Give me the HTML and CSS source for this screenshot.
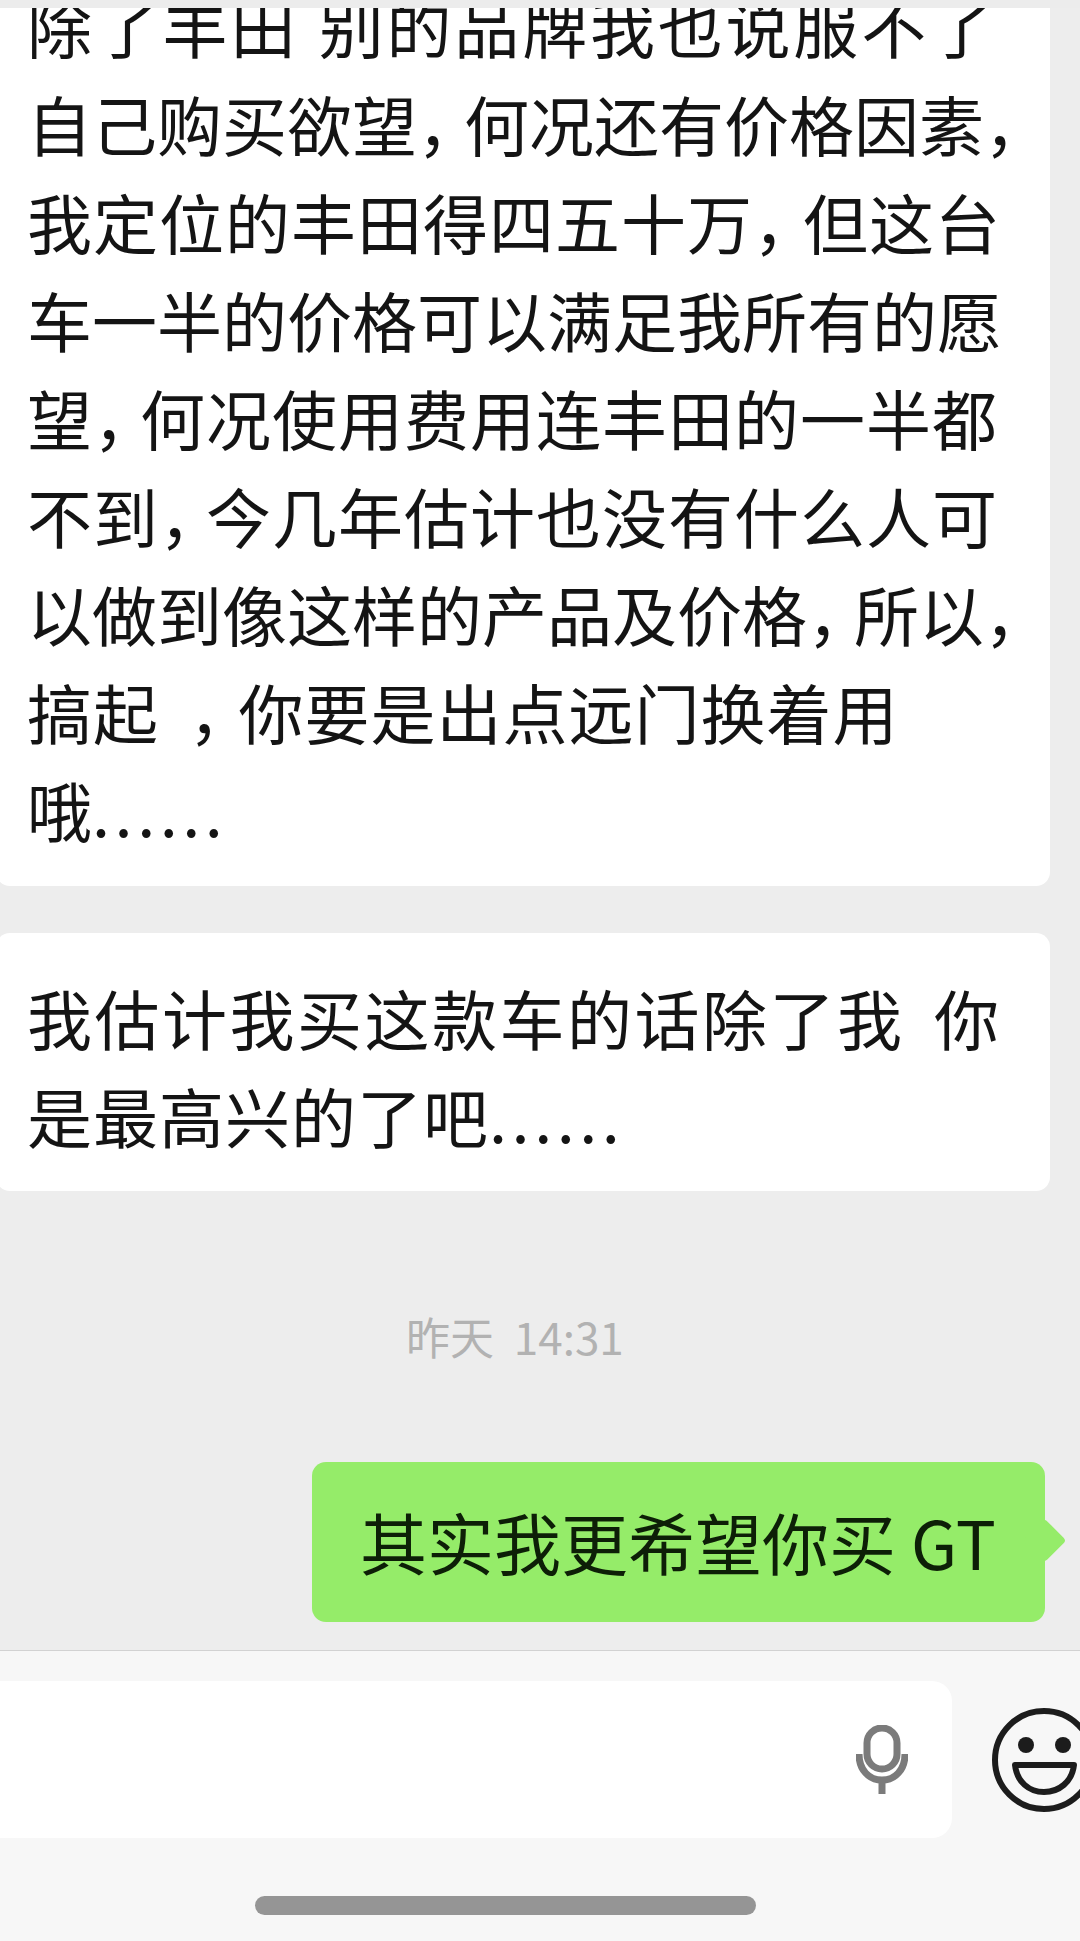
FILE: index.html
```html
<!DOCTYPE html>
<html lang="zh-CN">
<head>
<meta charset="utf-8">
<title>聊天</title>
<link rel="stylesheet" href="styles.css">
</head>
<body>
<div class="strip"></div>
<main class="chat">
  <section class="bubble first">
    <p class="line top">除了丰田<span class="gap-tight"> </span>别的品牌我也说服不了</p>
    <p class="line">自己购买欲望<span class="cm-tight">，</span>何况还有价格因素<span class="cm-tight">，</span></p>
    <p class="line mid">我定位的丰田得四五十万<span class="cm">，</span>但这台</p>
    <p class="line">车一半的价格可以满足我所有的愿</p>
    <p class="line mid">望<span class="cm-tight">，</span>何况使用费用连丰田的一半都</p>
    <p class="line mid">不到<span class="cm-tight">，</span>今几年估计也没有什么人可</p>
    <p class="line">以做到像这样的产品及价格<span class="cm-tight">，</span>所以<span class="cm-tight">，</span></p>
    <p class="line mid">搞起<span class="gap"> </span><span class="cm">，</span>你要是出点远门换着用</p>
    <p class="line">哦<span class="dots">......</span></p>
  </section>
  <section class="bubble second">
    <p class="line wide">我估计我买这款车的话除了我<span class="gap"> </span>你</p>
    <p class="line mid">是最高兴的了吧<span class="dots">......</span></p>
  </section>
  <div class="time">昨天 14:31</div>
  <section class="mine"><p class="mine-text">其实我更希望你买 GT</p></section>
</main>
<footer class="bar">
  <div class="input-row">
    <div class="input">
      <svg class="mic" viewBox="0 0 52 69" aria-hidden="true">
        <rect x="11" y="3" width="30" height="41" rx="15" fill="none" stroke="#7b7b7b" stroke-width="7"/>
        <path d="M3 29 C3 45 13 55 26 55 C39 55 49 45 49 29" fill="none" stroke="#7b7b7b" stroke-width="7"/>
        <path d="M26 55 V69" fill="none" stroke="#7b7b7b" stroke-width="7"/>
      </svg>
    </div>
    <svg class="emoji" viewBox="0 0 106 106" aria-hidden="true">
      <circle cx="53" cy="53" r="49" fill="none" stroke="#1c1c1c" stroke-width="6"/>
      <circle cx="35" cy="38" r="8" fill="#1c1c1c"/>
      <circle cx="72" cy="38" r="8" fill="#1c1c1c"/>
      <path d="M24 58 H83 C81 75 68 85 53 85 C38 85 26 75 24 58 Z" fill="none" stroke="#1c1c1c" stroke-width="6" stroke-linejoin="round"/>
    </svg>
  </div>
  <div class="home"></div>
</footer>
</body>
</html>
```
FILE: styles.css
```css
* { box-sizing: border-box; }
html, body { margin: 0; padding: 0; }
body {
  width: 1080px;
  height: 1941px;
  overflow: hidden;
  display: flex;
  flex-direction: column;
  background: #ededed;
  font-family: "Noto Sans CJK SC", "Liberation Sans", sans-serif;
  color: #141414;
}
.strip { height: 8px; flex: none; background: #ececec; }
.chat { flex: 1; overflow: hidden; }
.bubble {
  width: 1054px;
  margin-left: -4px;
  padding: 0 0 0 31px;
  background: #fff;
  border-radius: 14px;
}
.first { margin-top: -72px; padding-top: 40px; padding-bottom: 28px; }
.second { margin-top: 47px; padding-top: 35px; padding-bottom: 27px; }
.line {
  margin: 0;
  font-size: 65px;
  line-height: 98px;
  height: 98px;
  white-space: nowrap;
}
.top { letter-spacing: 2.8px; }
.wide { letter-spacing: 2.5px; }
.mid { letter-spacing: 1px; }
.gap { letter-spacing: 15px; }
.gap-tight { letter-spacing: 6px; }
.cm { letter-spacing: -15px; }
.cm-tight { letter-spacing: -18px; }
.dots { letter-spacing: 4.5px; }
.time {
  margin: 120px 0 101px 406px;
  font-size: 44px;
  line-height: 50px;
  word-spacing: 10px;
  color: #b2b2b2;
}
.mine {
  position: relative;
  width: 733px;
  height: 160px;
  margin-left: 312px;
  padding: 0 0 3px 48px;
  display: flex;
  align-items: center;
  background: #95ec69;
  border-radius: 14px;
}
.mine::after {
  content: "";
  position: absolute;
  right: -15px;
  top: 63px;
  width: 31px;
  height: 31px;
  background: #95ec69;
  border-radius: 4px;
  transform: rotate(45deg);
}
.mine-text {
  margin: 0;
  font-size: 67px;
  line-height: 98px;
  white-space: nowrap;
  color: #0d1f07;
}
.bar {
  flex: none;
  height: 291px;
  background: #f7f7f7;
  border-top: 1px solid #d2d2d2;
  overflow: hidden;
}
.input-row {
  display: flex;
  align-items: center;
  margin-top: 30px;
  height: 157px;
}
.input {
  flex: none;
  width: 972px;
  height: 157px;
  margin-left: -20px;
  background: #fff;
  border-radius: 20px;
  display: flex;
  align-items: center;
  justify-content: flex-end;
  padding-right: 44px;
}
.mic { width: 52px; height: 69px; display: block; }
.emoji { flex: none; width: 106px; height: 106px; margin-left: 39px; }
.home {
  width: 501px;
  height: 19px;
  margin: 58px 0 0 255px;
  background: #959595;
  border-radius: 10px;
}
```
